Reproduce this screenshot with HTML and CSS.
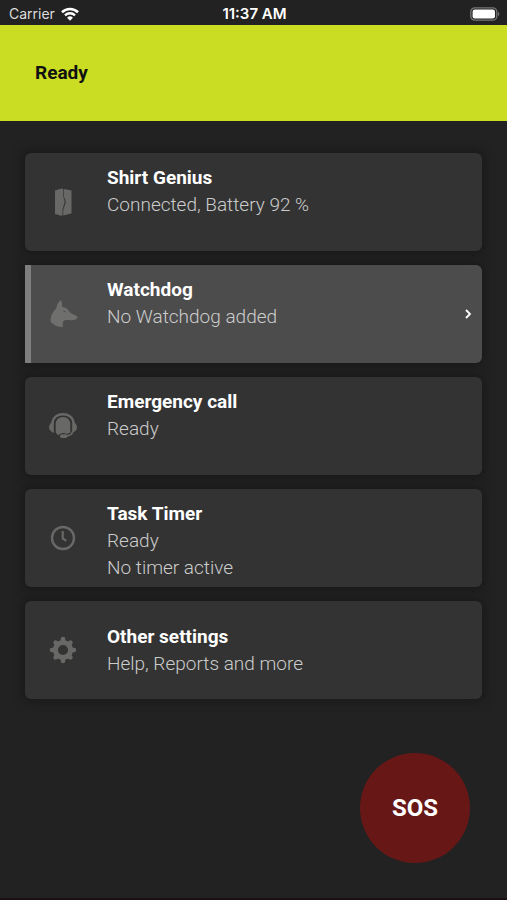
FILE: index.html
```html
<!DOCTYPE html>
<html lang="en">
<head>
<meta charset="utf-8">
<meta name="viewport" content="width=device-width, initial-scale=1">
<title>Ready</title>
<link rel="stylesheet" href="styles.css">
</head>
<body>
<div class="status-bar">
  <div class="carrier">
    <span>Carrier</span>
    <svg class="wifi" viewBox="0 0 18 14" aria-hidden="true">
      <path d="M1 5.2a11.5 11.5 0 0 1 16 0" fill="none" stroke="#fff" stroke-width="2.6"/>
      <path d="M4 8.3a7.3 7.3 0 0 1 10 0" fill="none" stroke="#fff" stroke-width="2.4"/>
      <path d="M9 13.8 6.1 10.8a4.1 4.1 0 0 1 5.8 0z" fill="#fff"/>
    </svg>
  </div>
  <time class="clock">11:37 AM</time>
  <svg class="battery" viewBox="0 0 30 14" aria-hidden="true">
    <rect x=".8" y=".8" width="26" height="12.4" rx="4" fill="none" stroke="#77777a" stroke-width="1.3"/>
    <rect x="2.6" y="2.6" width="22.4" height="8.8" rx="2.2" fill="#fff"/>
    <path d="M28 4.8c1.8.8 1.8 3.6 0 4.4z" fill="#77777a"/>
  </svg>
</div>
<header class="banner"><h1>Ready</h1></header>
<main class="cards">
  <a class="card" href="#shirt">
    <svg class="icon" viewBox="0 0 32 32" aria-hidden="true">
      <path d="M8 4.500 14.500 2.500 16.200 3v7l1.500 6-2.200 7.500v5.700l-1.500.6L8 28z" fill="#686866"/>
      <path d="M16.800 3 24.500 4.500v23l-8.300 2V24l2.600-8-2-6z" fill="#686866"/>
    </svg>
    <span class="text"><strong>Shirt Genius</strong><span>Connected, Battery 92 %</span></span>
  </a>
  <a class="card active" href="#watchdog">
    <svg class="icon" viewBox="0 0 32 32" aria-hidden="true">
      <path d="M13.800 2c1.200 2.200 1.500 4.500 1.500 7 2 .1 4 .8 5.500 2.500l2.700 3.500 6.500 3.300.6 1.300-2.100 2.200c-3.500.6-6.500.3-9.500.2-2.500.8-3.300 1.500-3.300 3.300l.2 3.700c-5 .3-9.500-1.700-12.400-5.500.2-5 1.500-9.300 5.700-13 .5-3.500 2-6.200 4.600-8.500z" fill="#6f6f6d"/>
      <path d="M15.800 12.800q2.200-.6 3.600 1.400-2.600.3-3.600-1.400z" fill="#4c4c4c"/>
    </svg>
    <span class="text"><strong>Watchdog</strong><span>No Watchdog added</span></span>
    <svg class="chevron" viewBox="0 0 8 12" aria-hidden="true"><path d="M2 2 6 6 2 10" fill="none" stroke="#fff" stroke-width="1.8"/></svg>
  </a>
  <a class="card" href="#call">
    <svg class="icon" viewBox="0 0 32 32" aria-hidden="true">
      <path d="M5.500 13C6 7 10.500 4.300 16 4.300S26 7 26.500 13" fill="none" stroke="#686866" stroke-width="2.400"/>
      <path d="M6.800 11v12C3.500 21.500 2 19.500 2 17.500s1.500-5 4.800-6.500zM25.200 11v12c3.300-1.500 4.800-3.500 4.800-5.500s-1.500-5-4.800-6.500z" fill="#686866"/>
      <path d="M8.700 22.500V14c0-4.200 3.300-7 7.300-7s7.300 2.800 7.300 7v8.500q-2 1.300-4.300 1.200-1.500-1.300-4.500-.5-2 .5-2.800 2-1.500-.7-3-2.700z" fill="#686866"/>
      <path d="M25.500 21.500c-.4 3-2.500 4.300-6.500 4.300" fill="none" stroke="#686866" stroke-width="1.800"/>
      <rect x="13" y="24.300" width="7.500" height="3.700" rx="1.800" fill="#686866"/>
    </svg>
    <span class="text"><strong>Emergency call</strong><span>Ready</span></span>
  </a>
  <a class="card" href="#timer">
    <svg class="icon" viewBox="0 0 32 32" aria-hidden="true">
      <circle cx="16" cy="16" r="11" fill="none" stroke="#686866" stroke-width="2.400"/>
      <path d="M15.700 9v7.400l3.600 2.500" fill="none" stroke="#686866" stroke-width="2.200"/>
    </svg>
    <span class="text"><strong>Task Timer</strong><span>Ready</span><span>No timer active</span></span>
  </a>
  <a class="card centered" href="#settings">
    <svg class="icon" viewBox="0 0 32 32" aria-hidden="true">
      <circle cx="16" cy="16" r="7.600" fill="none" stroke="#686866" stroke-width="5"/>
      <g stroke="#686866" stroke-width="4.600" stroke-linecap="round">
        <path d="M16 5v2M16 25v2M5 16h2M25 16h2M8.600 8.600l1 1M22.400 22.400l1 1M8.600 23.400l1-1M22.400 9.600l1-1"/>
      </g>
    </svg>
    <span class="text"><strong>Other settings</strong><span>Help, Reports and more</span></span>
  </a>
</main>
<footer class="actions"><button class="sos" type="button">SOS</button></footer>
</body>
</html>
```
FILE: styles.css
```css
* { box-sizing: border-box; }

body {
  margin: 0;
  min-height: 100vh;
  display: flex;
  flex-direction: column;
  background: #222;
  color: #fff;
  font-family: Roboto, "Liberation Sans", sans-serif;
  border-bottom: 2px solid #1b1016;
}

.status-bar {
  display: grid;
  grid-template-columns: 1fr auto 1fr;
  align-items: center;
  height: 25px;
  padding: 2px 7px 0 9px;
  font-family: Inter, "Liberation Sans", sans-serif;
  font-size: 14px;
}

.carrier { display: flex; align-items: center; gap: 6px; color: #ddd; }
.wifi { width: 18px; height: 14px; }
.clock { font-size: 15px; font-weight: 600; }
.battery { width: 30px; height: 14px; justify-self: end; }

.banner {
  display: flex;
  align-items: center;
  height: 96px;
  padding: 0 35px 2px;
  background: #cadd22;
  color: #111;
}

.banner h1 { margin: 0; font-size: 19px; font-weight: 700; }

.cards {
  display: flex;
  flex-direction: column;
  gap: 14px;
  padding: 32px 25px 0;
}

.card {
  display: flex;
  align-items: center;
  min-height: 98px;
  padding: 0 10px 0 22px;
  border-radius: 6px;
  background: #333;
  box-shadow: 0 0 10px 3px #1a1a1a;
  color: inherit;
  text-decoration: none;
}

.card.active {
  padding-left: 16px;
  border-left: 6px solid #7e7e7e;
  border-radius: 0 6px 6px 0;
  background: #4c4c4c;
}

.icon { width: 32px; height: 32px; flex: none; }

.text {
  display: flex;
  flex: 1;
  flex-direction: column;
  align-self: flex-start;
  padding: 11px 0 4px 28px;
  color: #ccc;
  font-size: 19px;
  font-weight: 300;
  line-height: 27px;
}

.text strong { color: #fff; font-weight: 700; }
.centered .text { align-self: center; padding-top: 0; padding-bottom: 0; }
.chevron { width: 8px; height: 12px; }

.actions {
  display: flex;
  justify-content: flex-end;
  padding: 54px 37px 35px;
}

.sos {
  width: 110px;
  height: 110px;
  padding: 0;
  border: 0;
  border-radius: 50%;
  background: #681717;
  color: #fff;
  font: 700 24px Roboto, "Liberation Sans", sans-serif;
}
```
